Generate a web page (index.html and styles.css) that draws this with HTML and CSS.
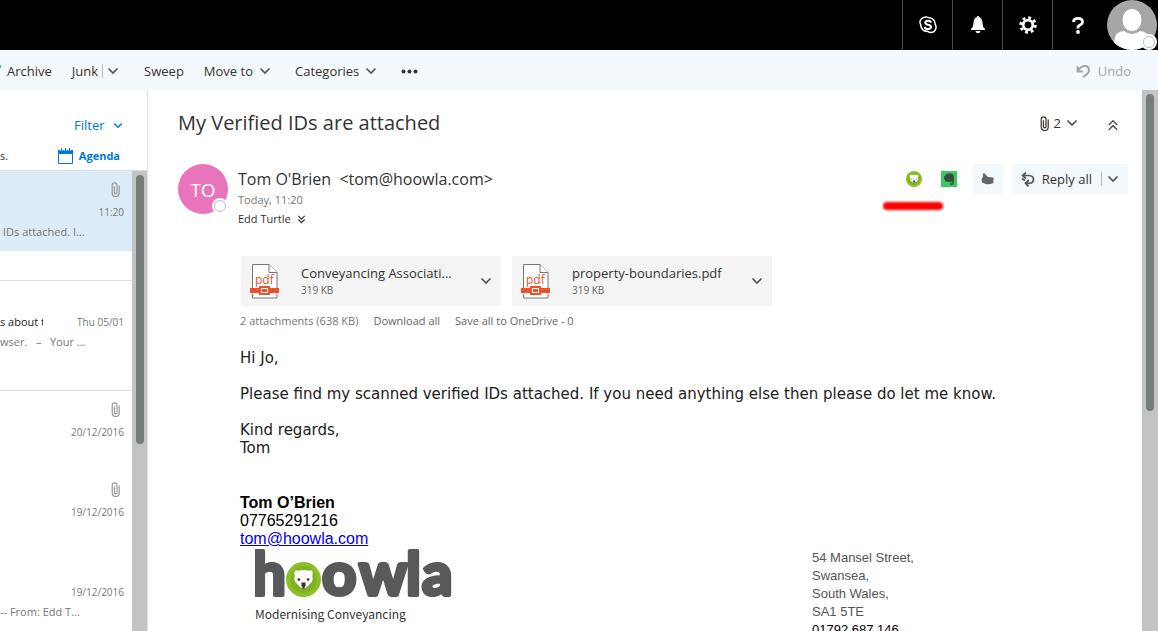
FILE: index.html
```html
<!DOCTYPE html>
<html lang="en">
<head>
<meta charset="utf-8">
<meta name="viewport" content="width=device-width, initial-scale=1">
<title>Mail - My Verified IDs are attached</title>
<link rel="stylesheet" href="styles.css">
</head>
<body>
<svg class="defs" aria-hidden="true">
  <symbol id="chevron" viewBox="0 0 12 8"><path d="M1.500 1.500 6 6l4.500-4.500" fill="none" stroke="currentColor" stroke-width="1.700"/></symbol>
  <symbol id="clip" viewBox="0 0 9 15"><path d="M6 4v6.500a1.300 1.300 0 0 1-2.600 0V4.200M8.200 3.500v7.500a3.500 3.500 0 0 1-7 0V3.200a2.400 2.400 0 0 1 4.800 0V6" fill="none" stroke="currentColor" stroke-width="1.200"/></symbol>
  <symbol id="double" viewBox="0 0 10 10"><path d="M1.500 1 5 4.500 8.500 1M1.500 5 5 8.500 8.500 5" fill="none" stroke="currentColor" stroke-width="1.300"/></symbol>
  <symbol id="bear" viewBox="0 0 34 34">
    <circle cx="17" cy="17" r="17" fill="#8dc028"/>
    <circle cx="17" cy="17" r="13" fill="#7fb321"/>
    <path d="M8 10q1-3 4-1.500 5-1.500 10 0 4-1.500 4 2l-.5 3q1 4-1 6.500l-4 4q-3.500 3-7 0l-4-4q-2-2.500-1-6.500z" fill="#fff"/>
    <circle cx="12.500" cy="17" r="1.300" fill="#333"/><circle cx="21.500" cy="17" r="1.300" fill="#333"/>
    <path d="M15 20h4v3l-1 1.500v1.500h-2v-1.500L15 23z" fill="#333"/>
  </symbol>
  <symbol id="pdf" viewBox="0 0 30 35">
    <path d="M2.500 24V.5H19l8 8V24M2.500 30v4H27v-4" fill="#fff" stroke="#777" stroke-width="1"/>
    <path d="M19 .5v8h8" fill="#fff" stroke="#777"/>
    <path d="M0 24h29v5H0z" fill="#e8532b"/>
    <path d="M9 22h11v9H9z" fill="#e8532b"/>
    <path d="M11.500 24.500h6v4h-6z" fill="#e8532b" stroke="#fff"/>
    <text x="5" y="20" font-size="12" fill="#e8532b">pdf</text>
  </symbol>
</svg>

<header class="suite">
  <button class="suite-btn" aria-label="Skype">
    <svg width="18" height="18" viewBox="0 0 18 18" fill="none" stroke="#fff"><path d="M5.500 1.300q2-.8 3.500.2 7 .5 7.300 7 1.200 2 .4 4.500-1.200 3.500-5.200 3.400-1.200 0-2.200-.8-7.200-.1-7.600-7Q.5 6.500 1.300 4.400 2.300 1.800 5.500 1.300z" stroke-width="1.500"/><path d="M12 6.800Q11.500 4.800 9 4.800T6.300 6.600q0 1.600 2.700 2.100 3 .6 3 2.300T9 13q-3 0-3.200-2.200" stroke-width="2"/></svg>
  </button>
  <button class="suite-btn" aria-label="Notifications">
    <svg width="14" height="18" viewBox="0 0 14 18" fill="#fff"><path d="M7 0q1.200 0 1.300 1.300Q11.500 2.500 11.500 7q0 4 2.500 6v1H0v-1q2.500-2 2.500-6 0-4.500 3.200-5.700Q5.800 0 7 0zM4.500 15h5Q9 17.300 7 17.300T4.500 15z"/></svg>
  </button>
  <button class="suite-btn" aria-label="Settings">
    <svg width="18" height="18" viewBox="0 0 18 18" fill="none" stroke="#fff"><circle cx="9" cy="9" r="4.800" stroke-width="2.800"/><circle cx="9" cy="9" r="7.400" stroke-width="2.600" stroke-dasharray="2.900 2.910"/></svg>
  </button>
  <button class="suite-btn" aria-label="Help">
    <svg width="12" height="17" viewBox="0 0 12 17" fill="none" stroke="#fff"><path d="M1.500 5Q1.500 1.400 6 1.400T10.500 5Q10.500 6.800 8 8T6 11.500" stroke-width="2.700"/><circle cx="6" cy="15" r="1.900" fill="#fff" stroke="none"/></svg>
  </button>
  <button class="me" aria-label="My account">
    <svg width="50" height="50" viewBox="0 0 50 50"><defs><clipPath id="round"><circle cx="25" cy="25" r="25"/></clipPath></defs><g clip-path="url(#round)"><path fill="#a6a6a6" d="M0 0h50v50H0z"/><path fill="#fff" d="M7 50V42Q8 31 17 31q8 6 16 0 9 0 10 11v8z"/><ellipse cx="25" cy="20" rx="10" ry="11.500" fill="#fff" stroke="#a6a6a6"/></g></svg>
    <span class="presence"></span>
  </button>
</header>

<nav class="toolbar" aria-label="Message commands">
  <button>Archive</button>
  <button class="junk">Junk<span class="bar"></span><svg class="chev"><use href="#chevron"/></svg></button>
  <button class="sweep">Sweep</button>
  <button>Move to<svg class="chev"><use href="#chevron"/></svg></button>
  <button class="categories">Categories<svg class="chev"><use href="#chevron"/></svg></button>
  <button aria-label="More"><svg width="17" height="5" viewBox="0 0 17 5" fill="#333"><circle cx="2.500" cy="2.500" r="2"/><circle cx="8.500" cy="2.500" r="2"/><circle cx="14.500" cy="2.500" r="2"/></svg></button>
  <button class="undo" disabled><svg width="14" height="15" viewBox="0 0 14 15" fill="none" stroke="#a6a6a6" stroke-width="2"><path d="M1.500 2v5.500H7M2 7Q5 2 9 2t4 4.500Q12.500 10 7 13"/></svg>Undo</button>
</nav>

<main class="main">
  <section class="list" aria-label="Messages">
    <div class="list-head">
      <button class="filter">Filter<svg class="chev small"><use href="#chevron"/></svg></button>
      <div class="agenda-row"><span>s.</span><a class="agenda" href="#"><svg width="15" height="16" viewBox="0 0 15 16"><path d="M.5 3v12.500h14V3" fill="#fff" stroke="#0078d7"/><path d="M0 2h15v4H0z" fill="#0078d7"/><path d="M3.500 0v3M7.500 0v3M11.500 0v3" stroke="#fff" stroke-width="2"/><path d="M3.500 0v3M7.500 0v3M11.500 0v3" stroke="#0078d7"/></svg>Agenda</a></div>
    </div>
    <div class="list-body">
      <div class="rows">
        <article class="row selected"><svg class="clip"><use href="#clip"/></svg><time>11:20</time><p class="indent">IDs attached. I...</p></article>
        <div class="group"></div>
        <article class="row"><div class="line"><b>s about t</b><time>Thu 05/01</time></div><p>wser. &nbsp; – &nbsp; Your ...</p></article>
        <div class="group"></div>
        <article class="row"><svg class="clip"><use href="#clip"/></svg><time>20/12/2016</time></article>
        <article class="row"><svg class="clip"><use href="#clip"/></svg><time>19/12/2016</time></article>
        <article class="row"><time>19/12/2016</time><p>-- From: Edd T...</p></article>
      </div>
      <div class="scroll" aria-hidden="true"><span></span></div>
    </div>
  </section>

  <section class="reading">
    <div class="message">
      <div class="subject">
        <h1>My Verified IDs are attached</h1>
        <button class="count"><svg class="clip"><use href="#clip"/></svg>2<svg class="chev"><use href="#chevron"/></svg></button>
        <button class="collapse" aria-label="Collapse"><svg><use href="#double"/></svg></button>
      </div>
      <div class="sender">
        <div class="avatar">TO<span class="presence"></span></div>
        <div class="who">
          <div class="name">Tom O'Brien &nbsp;&lt;tom@hoowla.com&gt;</div>
          <div class="date">Today, 11:20</div>
          <div class="to">Edd Turtle<svg><use href="#double"/></svg></div>
        </div>
        <div class="actions">
          <button class="addin hoowla" aria-label="Hoowla"><svg width="16" height="16"><use href="#bear"/></svg><span class="mark"></span></button>
          <button class="addin" aria-label="Evernote"><svg width="16" height="16" viewBox="0 0 16 16"><path fill="#3acb60" d="M0 0h16v16H0z"/><path fill="#3d4a40" d="M3 5.500 6 2.500h4l2.500 1q1.300 5 .2 9.500-1 1.500-3.200.8-1-2.300 1-2.500V10q-1 1.500-3.500.8Q3 11 3 5.500z"/><path d="M10 12h1.500" stroke="#3acb60"/></svg></button>
          <button class="like" aria-label="Like"><svg width="13" height="12" viewBox="0 0 13 12" fill="#666"><path d="M2.500 0Q4 0 4.500 1.500L7 4l5.500.500V10q-3 1.500-7 1.200L1 9.500Q0 7 1 5 2.500 4 2 1z"/></svg></button>
          <button class="reply"><svg width="14" height="15" viewBox="0 0 14 15" fill="none" stroke="#555" stroke-width="1.700"><path d="M5 .5 1.500 3.500 5 6.500M2 3.500h6q4.500.3 4.500 4T8 11.300L4 11M8 8l-3.500 3.200L7.500 14.500M1 6.500 4 8.500"/></svg>Reply all<span class="bar"></span><svg class="chev"><use href="#chevron"/></svg></button>
        </div>
      </div>

      <div class="content">
        <div class="files">
          <button class="file"><svg class="pdf"><use href="#pdf"/></svg><span class="info"><span class="fname">Conveyancing Associati...</span><span class="size">319 KB</span></span><svg class="chev"><use href="#chevron"/></svg></button>
          <button class="file"><svg class="pdf"><use href="#pdf"/></svg><span class="info"><span class="fname">property-boundaries.pdf</span><span class="size">319 KB</span></span><svg class="chev"><use href="#chevron"/></svg></button>
        </div>
        <div class="file-links"><span>2 attachments (638 KB)</span><a href="#">Download all</a><a href="#">Save all to OneDrive - 0</a></div>
        <div class="text">
          <p>Hi Jo,</p>
          <p>Please find my scanned verified IDs attached. If you need anything else then please do let me know.</p>
          <p>Kind regards,<br>Tom</p>
        </div>
        <div class="signature">
          <strong>Tom O’Brien</strong>
          <span>07765291216</span>
          <a href="mailto:tom@hoowla.com">tom@hoowla.com</a>
          <div class="company">
            <div class="brand">
              <svg class="logo" width="202" height="50" viewBox="0 0 202 50">
                <g class="wordmark"><text x="-3" y="47">h</text><text x="67 104 151 167" y="47">owla</text></g>
                <use href="#bear" x="31" y="14" width="35" height="35"/>
              </svg>
              <div class="tagline">Modernising Conveyancing</div>
            </div>
            <address>54 Mansel Street,<br>Swansea,<br>South Wales,<br>SA1 5TE<br><span>01792 687 146</span></address>
          </div>
        </div>
      </div>
    </div>
    <div class="scroll wide" aria-hidden="true"><span></span></div>
  </section>
</main>
</body>
</html>
```
FILE: styles.css
```css
* { box-sizing: border-box; }
body { margin: 0; height: 100vh; overflow: hidden; display: flex; flex-direction: column; background: #fff; color: #333; font: 14px/20px "Open Sans", "Noto Sans", sans-serif; }
button { border: 0; margin: 0; padding: 0; background: none; color: inherit; font: inherit; display: flex; align-items: center; }
p, h1 { margin: 0; font-weight: 400; }
a { color: inherit; text-decoration: none; }
svg { flex: none; display: block; }
.defs { position: absolute; width: 0; height: 0; }
.chev { width: 12px; height: 8px; color: #555; }
.clip { width: 9px; height: 15px; }

.suite { flex: none; height: 50px; background: #000; display: flex; justify-content: flex-end; padding-right: 1px; }
.suite-btn { width: 50px; justify-content: center; border-left: 1px solid #4a4a4a; }
.me { position: relative; margin-left: 5px; }
.presence { position: absolute; right: 0; bottom: 0; width: 16px; height: 16px; border-radius: 50%; background: #fff; border: 2px solid #fff; }
.presence::after { content: ""; display: block; box-sizing: border-box; height: 12px; border: 1px solid #9cc3d5; border-radius: 50%; }

.toolbar { flex: none; height: 40px; display: flex; align-items: center; padding: 2px 27px 0 7px; background: #f4f9fd; font-size: 13px; gap: 20px; background-image: linear-gradient(#29b6e8, #29b6e8); background-size: 1px 3px; background-position: 0 15px; background-repeat: no-repeat; }
.toolbar .chev { margin-left: 6px; }
.bar { width: 1px; height: 14px; background: #bbb; margin-left: 4px; }
.toolbar .bar + .chev { margin-left: 4px; }
.sweep { margin-left: 5px; }
.categories { margin: 0 4px; }
.undo { margin-left: auto; color: #a6a6a6; gap: 8px; }

.main { flex: 1; min-height: 0; display: flex; }
.list { flex: none; width: 148px; border-right: 1px solid #e1e1e1; display: flex; flex-direction: column; font-size: 11px; color: #777; }
.list-head { flex: none; height: 81px; border-bottom: 1px solid #e1e1e1; color: #0078d7; padding-top: 25px; }
.filter { font-size: 13px; margin-left: 74px; gap: 8px; }
.filter .chev { width: 10px; height: 7px; color: #0078d7; }
.agenda-row { display: flex; justify-content: space-between; padding-right: 27px; margin-top: 11px; }
.agenda-row span { color: #333; }
.agenda { display: flex; align-items: center; gap: 6px; font-weight: 700; }
.list-body { flex: 1; min-height: 0; display: flex; }
.rows { flex: 1; min-width: 0; }
.row { height: 80px; padding: 0 8px 9px 0; display: flex; flex-direction: column; justify-content: flex-end; }
.row .clip { color: #999; margin: 0 4px 5px auto; }
.row time { margin-left: auto; font-size: 10px; line-height: 20px; }
.row:not(:has(p)) { padding-bottom: 29px; }
.row p { line-height: 20px; white-space: nowrap; }
.row .indent { padding-left: 3px; }
.line { display: flex; color: #777; }
.line b { font-weight: 400; color: #222; width: 43px; overflow: hidden; white-space: nowrap; }
.selected { background: #dcebf8; }
.group { height: 30px; border-bottom: 1px solid #e1e1e1; }
.scroll { flex: none; width: 15px; background: #c2c4c3; padding: 4px 3px 0 4px; }
.scroll span { display: block; height: 59%; border-radius: 4px; background: #777c7b; }
.wide { width: 16px; padding: 4px 4px 0; }

.reading { flex: 1; min-width: 0; display: flex; }
.message { flex: 1; min-width: 0; overflow: hidden; padding: 18px 14px 0 30px; }
.subject { display: flex; align-items: center; height: 30px; }
.subject h1 { font-size: 20px; line-height: 30px; margin-right: auto; }
.count { gap: 5px; font-size: 13px; }
.collapse { margin: 4px 9px 0 29px; }
.collapse svg { width: 12px; height: 12px; transform: rotate(180deg); color: #555; }
.sender { display: flex; margin-top: 26px; }
.avatar { position: relative; width: 50px; height: 50px; border-radius: 50%; background: #e874bb; color: #fff; font-size: 19px; line-height: 52px; text-align: center; }
.who { margin-left: 10px; padding-top: 4px; }
.name { font-size: 16px; line-height: 22px; }
.date { font-size: 11px; line-height: 20px; color: #777; }
.to { display: flex; align-items: center; gap: 6px; font-size: 11px; line-height: 18px; }
.to svg { width: 9px; height: 9px; }
.actions { display: flex; height: 30px; margin-left: auto; }
.addin { padding: 0 10px 0 9px; position: relative; }
.mark { position: absolute; left: -14px; top: 38px; width: 60px; height: 8px; border-radius: 4px; background: #f00; filter: blur(1px); }
.like { width: 30px; justify-content: center; background: #f4f9fd; margin: 0 9px 0 6px; }
.reply { background: #f4f9fd; padding: 0 9px; gap: 5px; font-size: 13px; }
.reply > svg:first-child { margin-right: 2px; }

.content { margin-left: 62px; margin-top: 28px; }
.files { display: flex; gap: 11px; padding-left: 1px; }
.file { width: 260px; height: 50px; background: #f4f4f4; padding: 0 9px; text-align: left; }
.pdf { width: 30px; height: 35px; }
.info { flex: 1; min-width: 0; margin-left: 21px; }
.fname { display: block; font-size: 13px; line-height: 18px; white-space: nowrap; }
.size { display: block; font-size: 10px; line-height: 16px; color: #666; }
.file-links { display: flex; gap: 15px; font-size: 11px; line-height: 20px; margin-top: 5px; color: #666; }
.file-links span { color: #777; }
.text { font: 15px/18px "DejaVu Sans", sans-serif; color: #212121; margin-top: 18px; }
.text p { margin-bottom: 18px; }
.signature { display: flex; flex-direction: column; align-items: flex-start; font: 16px/18px "Liberation Sans", Arial, sans-serif; color: #000; margin-top: 37px; }
.signature > a { color: #00e; text-decoration: underline; }
.company { display: flex; }
.brand { width: 572px; padding-left: 15px; }
.wordmark { font: 700 60px "Lato", sans-serif; fill: #58595b; stroke: #58595b; stroke-width: 4px; stroke-linejoin: round; }
.tagline { font: 400 12px/20px "Noto Sans CJK SC", sans-serif; color: #333; margin-top: 6px; }
address { font: 13px/18px "Liberation Sans", Arial, sans-serif; color: #555; padding-top: 1px; }
address span { color: #000; }
```
